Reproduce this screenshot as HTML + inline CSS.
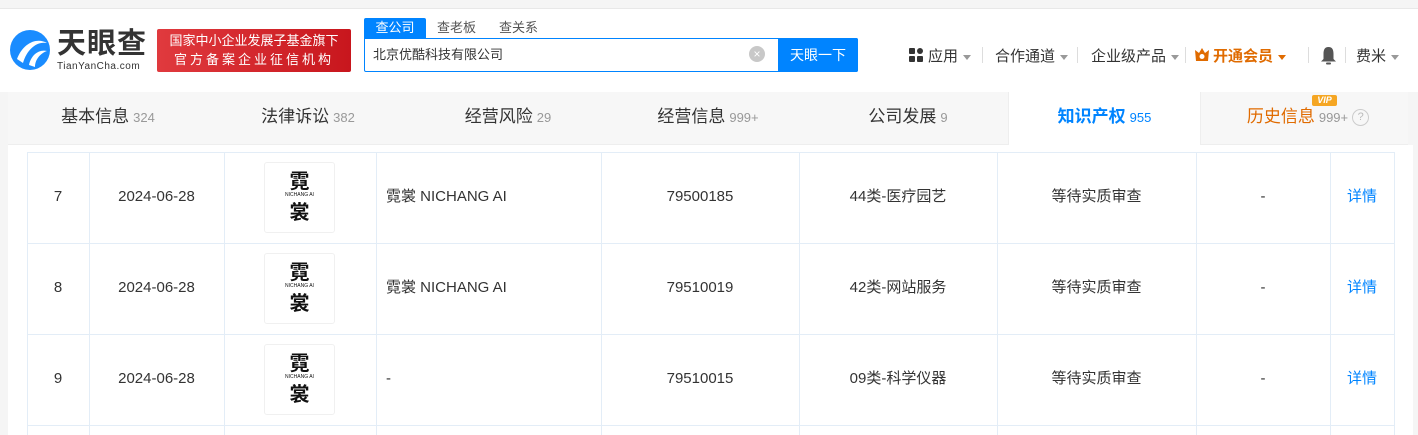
<!DOCTYPE html>
<html><head><meta charset="utf-8"><style>
*{margin:0;padding:0;box-sizing:border-box}
body{width:1418px;height:435px;overflow:hidden;background:#f5f5f5;font-family:"Liberation Sans","Noto Sans CJK SC",sans-serif;color:#333;position:relative}
.hdr{position:absolute;left:0;top:8px;width:1418px;height:84px;background:#fff;border-top:1px solid #e8e8e8}
.abs{position:absolute}
.tabs{position:absolute;left:8px;top:92px;width:1400px;height:53px;background:#f7f7f7;border-bottom:1px solid #eee}
.tab{position:absolute;top:0;height:53px;width:200px;text-align:center;line-height:50px;font-size:17px;color:#333}
.tab span{font-size:13px;color:#999;margin-left:4px}
.tbl{position:absolute;left:8px;top:145px;width:1405px;height:290px;background:#fff}
.v{position:absolute;top:152px;height:283px;width:1px;background:#e3edf7}
.h{position:absolute;left:27px;width:1368px;height:1px;background:#e3edf7}
.c{position:absolute;font-size:15px;line-height:20px;height:20px;color:#333;text-align:center}
.logo{position:absolute;left:264px;width:71px;height:71px;border:1px solid #f0f0f0;border-radius:3px;background:#fff;text-align:center;font-family:"Noto Sans CJK SC",sans-serif;color:#111}
.logo b{display:block;font-size:20px;line-height:22px;margin-top:6px}
.logo i{display:block;font-style:normal;font-size:5px;font-family:"Liberation Sans",sans-serif;line-height:8px}
.logo u{display:block;text-decoration:none;font-size:20px;line-height:24px;font-weight:bold}
.nav{position:absolute;top:45px;font-size:15px;color:#333}
.tri{display:inline-block;width:0;height:0;border-left:4px solid transparent;border-right:4px solid transparent;border-top:5px solid #999;vertical-align:middle;margin-left:5px}
.sep{position:absolute;top:47px;width:1px;height:16px;background:#ddd}
</style></head><body>
<div class="hdr"></div>
<svg class="abs" style="left:9px;top:29px" width="42" height="42" viewBox="0 0 42 42"><circle cx="21" cy="21" r="20" fill="#1a8cff"/><path d="M8 30 C14 14 28 8 38 14 C28 12 18 20 14 34 Z" fill="#fff"/><path d="M20 36 C22 26 30 20 38 22 C32 24 26 30 26 38 Z" fill="#fff"/></svg>
<div class="abs" style="left:57px;top:28px;font-size:29px;font-weight:bold;color:#333;line-height:32px;letter-spacing:1px">天眼查</div>
<div class="abs" style="left:57px;top:61px;font-size:10px;color:#333;letter-spacing:0.5px">TianYanCha.com</div>
<div class="abs" style="left:157px;top:29px;width:194px;height:43px;background:linear-gradient(90deg,#e03a3e,#c8161d);border-radius:2px;color:#fff;font-size:13px;line-height:19px;text-align:center;padding-top:2px">国家中小企业发展子基金旗下<br><span style="letter-spacing:3px">官方备案企业征信机构</span></div>
<div class="abs" style="left:364px;top:18px;width:62px;height:20px;background:#0084ff;color:#fff;font-size:13px;text-align:center;line-height:20px;border-radius:2px 2px 0 0">查公司</div>
<div class="abs" style="left:437px;top:18px;font-size:13px;color:#555;line-height:20px">查老板</div>
<div class="abs" style="left:499px;top:18px;font-size:13px;color:#555;line-height:20px">查关系</div>
<div class="abs" style="left:364px;top:38px;width:494px;height:34px;border:1px solid #0084ff;border-radius:0 2px 2px 2px;background:#fff"></div>
<div class="abs" style="left:373px;top:38px;line-height:34px;font-size:13px;color:#333">北京优酷科技有限公司</div>
<div class="abs" style="left:749px;top:46px;width:16px;height:16px;border-radius:50%;background:#c8c8c8;color:#fff;font-size:12px;line-height:16px;text-align:center">×</div>
<div class="abs" style="left:778px;top:38px;width:80px;height:34px;background:#0084ff;color:#fff;font-size:14px;line-height:34px;text-align:center;border-radius:0 2px 2px 0">天眼一下</div>
<svg class="abs" style="left:909px;top:48px" width="14" height="14"><rect x="0" y="0" width="6" height="6" rx="1" fill="#333"/><rect x="8" y="0" width="6" height="6" rx="3" fill="#333"/><rect x="0" y="8" width="6" height="6" rx="1" fill="#333"/><rect x="8" y="8" width="6" height="6" rx="1" fill="#333"/></svg>
<div class="nav" style="left:928px">应用<i class="tri"></i></div>
<div class="sep" style="left:982px"></div>
<div class="nav" style="left:995px">合作通道<i class="tri"></i></div>
<div class="sep" style="left:1077px"></div>
<div class="nav" style="left:1091px">企业级产品<i class="tri"></i></div>
<div class="sep" style="left:1185px"></div>
<svg class="abs" style="left:1194px;top:48px" width="16" height="14" viewBox="0 0 16 14"><path d="M1 2 L5 5 L8 0 L11 5 L15 2 L14 13 L2 13 Z" fill="#e06b00"/><circle cx="8" cy="8.5" r="2.5" fill="#fff"/></svg>
<div class="nav" style="left:1213px;color:#e06b00;font-weight:bold">开通会员<i class="tri" style="border-top-color:#e06b00"></i></div>
<div class="sep" style="left:1308px"></div>
<svg class="abs" style="left:1320px;top:46px" width="17" height="19" viewBox="0 0 17 19"><path d="M8.5 1 C4.5 1 3.5 4 3.5 8 L3.5 13 L1 15.5 L16 15.5 L13.5 13 L13.5 8 C13.5 4 12.5 1 8.5 1 Z" fill="#555"/><rect x="6" y="16.5" width="5" height="2" rx="1" fill="#555"/></svg>
<div class="sep" style="left:1345px"></div>
<div class="nav" style="left:1356px">费米<i class="tri"></i></div>
<div class="tabs">
<div class="tab" style="left:0">基本信息<span>324</span></div>
<div class="tab" style="left:200px">法律诉讼<span>382</span></div>
<div class="tab" style="left:400px">经营风险<span>29</span></div>
<div class="tab" style="left:600px">经营信息<span>999+</span></div>
<div class="tab" style="left:800px">公司发展<span>9</span></div>
<div class="tab" style="left:1000px;width:193px;background:#fff;color:#0084ff;font-weight:bold;border-left:1px solid #eee;border-right:1px solid #eee">知识产权<span style="color:#0084ff;font-weight:normal">955</span></div>
<div class="tab" style="left:1200px;color:#e06b00">历史信息<span>999+</span><span style="display:inline-block;width:17px;height:17px;border:1.5px solid #ccc;border-radius:50%;font-size:11px;line-height:14px;color:#bbb;vertical-align:middle;margin-left:4px">?</span></div>
<div class="abs" style="left:1304px;top:3px;width:25px;height:11px;background:#f5a623;color:#fff;font-size:9px;font-weight:bold;font-style:italic;line-height:11px;text-align:center;border-radius:2px">VIP</div>
</div>
<div class="tbl"></div>
<div class="v" style="left:27px"></div><div class="v" style="left:89px"></div><div class="v" style="left:224px"></div><div class="v" style="left:376px"></div><div class="v" style="left:601px"></div><div class="v" style="left:799px"></div><div class="v" style="left:997px"></div><div class="v" style="left:1196px"></div><div class="v" style="left:1330px"></div><div class="v" style="left:1394px"></div>
<div class="h" style="top:152px"></div><div class="h" style="top:243px"></div><div class="h" style="top:334px"></div><div class="h" style="top:425px"></div>

<div class="c" style="left:27px;width:62px;top:187px">7</div>
<div class="c" style="left:89px;width:135px;top:187px">2024-06-28</div>
<div class="logo" style="top:162px"><b>霓</b><i>NICHANG AI</i><u>裳</u></div>
<div class="c" style="left:386px;top:187px;text-align:left">霓裳 NICHANG AI</div>
<div class="c" style="left:601px;width:198px;top:187px">79500185</div>
<div class="c" style="left:799px;width:198px;top:187px">44类-医疗园艺</div>
<div class="c" style="left:997px;width:199px;top:187px">等待实质审查</div>
<div class="c" style="left:1196px;width:134px;top:187px">-</div>
<div class="c" style="left:1330px;width:64px;top:187px;color:#0084ff">详情</div>

<div class="c" style="left:27px;width:62px;top:278px">8</div>
<div class="c" style="left:89px;width:135px;top:278px">2024-06-28</div>
<div class="logo" style="top:253px"><b>霓</b><i>NICHANG AI</i><u>裳</u></div>
<div class="c" style="left:386px;top:278px;text-align:left">霓裳 NICHANG AI</div>
<div class="c" style="left:601px;width:198px;top:278px">79510019</div>
<div class="c" style="left:799px;width:198px;top:278px">42类-网站服务</div>
<div class="c" style="left:997px;width:199px;top:278px">等待实质审查</div>
<div class="c" style="left:1196px;width:134px;top:278px">-</div>
<div class="c" style="left:1330px;width:64px;top:278px;color:#0084ff">详情</div>

<div class="c" style="left:27px;width:62px;top:369px">9</div>
<div class="c" style="left:89px;width:135px;top:369px">2024-06-28</div>
<div class="logo" style="top:344px"><b>霓</b><i>NICHANG AI</i><u>裳</u></div>
<div class="c" style="left:386px;top:369px;text-align:left">-</div>
<div class="c" style="left:601px;width:198px;top:369px">79510015</div>
<div class="c" style="left:799px;width:198px;top:369px">09类-科学仪器</div>
<div class="c" style="left:997px;width:199px;top:369px">等待实质审查</div>
<div class="c" style="left:1196px;width:134px;top:369px">-</div>
<div class="c" style="left:1330px;width:64px;top:369px;color:#0084ff">详情</div>
</body></html>
